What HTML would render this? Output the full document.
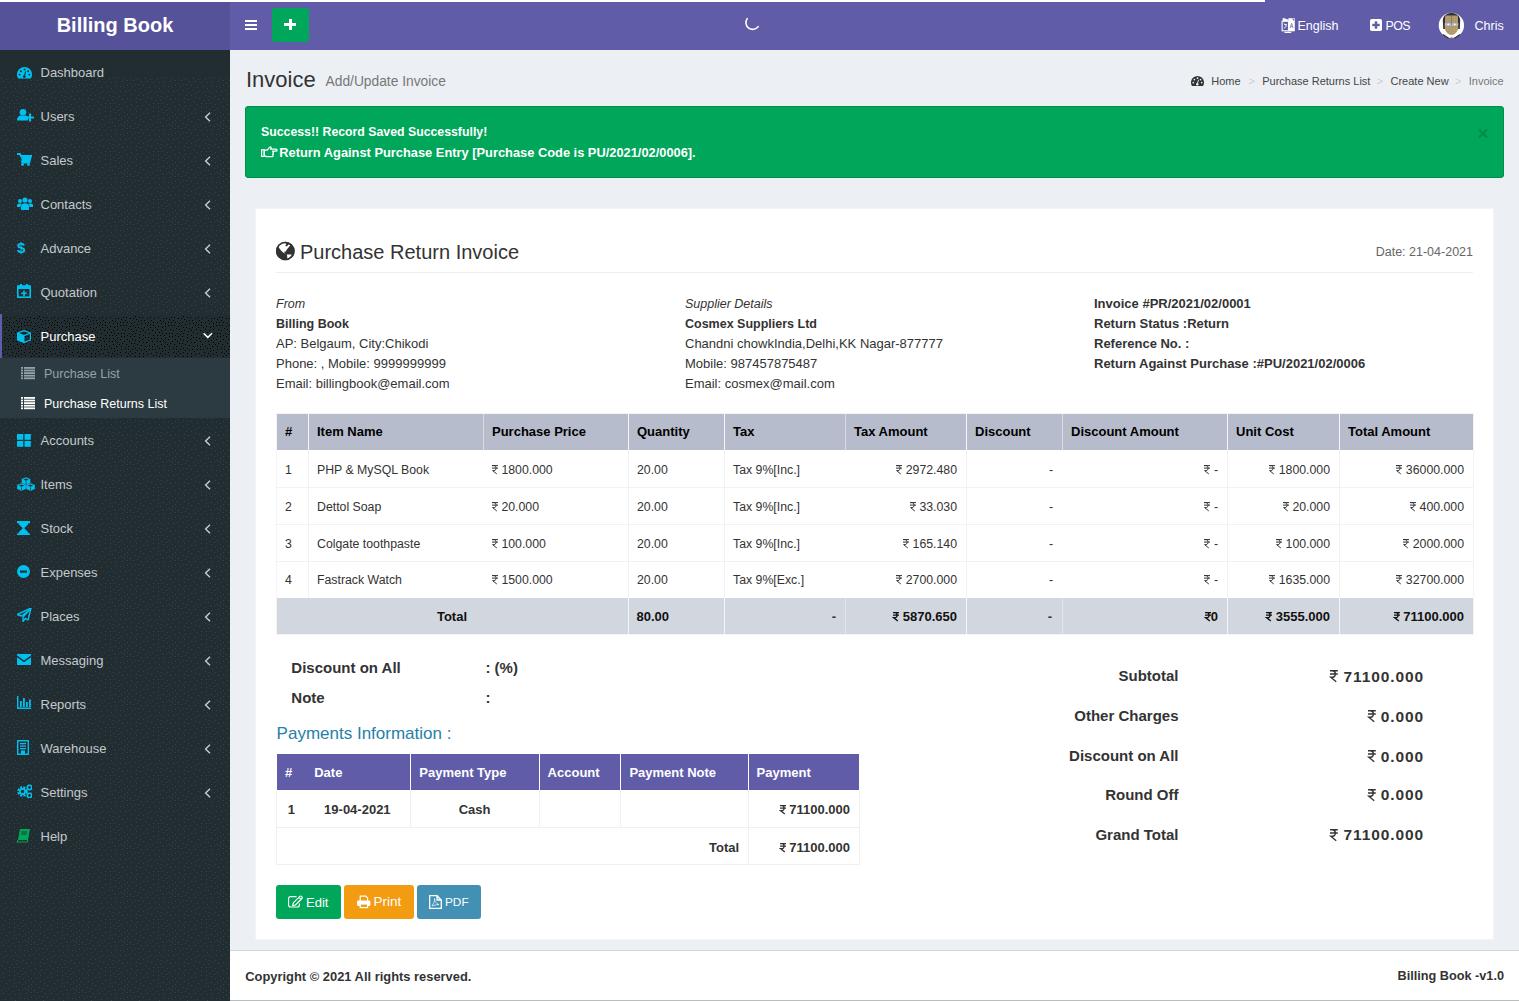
<!DOCTYPE html>
<html><head><meta charset="utf-8"><title>Invoice</title>
<style>
html,body{margin:0;padding:0;width:1519px;height:1001px;overflow:hidden;background:#ecf0f5;}
body{position:relative;font-family:"Liberation Sans",sans-serif;}
.t{position:absolute;white-space:pre;}
.r{position:absolute;display:block;}
</style></head><body>
<div class="r" style="left:0px;top:0px;width:1519px;height:1001px;background:#ecf0f5;"></div>
<div class="r" style="left:0px;top:0px;width:1265px;height:2px;background:#ffffff;"></div>
<div class="r" style="left:1265px;top:0px;width:254px;height:2px;background:#605ca8;"></div>
<div class="r" style="left:0px;top:2px;width:230px;height:48px;background:#555299;"></div>
<div class="r" style="left:230px;top:2px;width:1289px;height:48px;background:#605ca8;"></div>
<div class="r" style="left:0px;top:50px;width:230px;height:951px;background:#222d32;"></div>
<svg class="r" style="left:0;top:77px" width="230" height="924"><defs><pattern id="dotsA" width="48" height="48" patternUnits="userSpaceOnUse"><rect x="20" y="9" width="1" height="1" fill="#36454d"/><rect x="25" y="41" width="1" height="1" fill="#36454d"/><rect x="3" y="4" width="1" height="1" fill="#36454d"/><rect x="34" y="6" width="1" height="1" fill="#36454d"/><rect x="23" y="37" width="1" height="1" fill="#36454d"/><rect x="3" y="32" width="1" height="1" fill="#36454d"/><rect x="13" y="2" width="1" height="1" fill="#36454d"/><rect x="5" y="27" width="1" height="1" fill="#36454d"/><rect x="26" y="4" width="1" height="1" fill="#36454d"/><rect x="15" y="5" width="1" height="1" fill="#36454d"/><rect x="35" y="27" width="1" height="1" fill="#36454d"/><rect x="3" y="36" width="1" height="1" fill="#36454d"/><rect x="7" y="14" width="1" height="1" fill="#36454d"/><rect x="40" y="40" width="1" height="1" fill="#36454d"/><rect x="37" y="3" width="1" height="1" fill="#36454d"/><rect x="36" y="37" width="1" height="1" fill="#36454d"/><rect x="18" y="26" width="1" height="1" fill="#36454d"/><rect x="9" y="34" width="1" height="1" fill="#36454d"/><rect x="19" y="35" width="1" height="1" fill="#36454d"/><rect x="43" y="11" width="1" height="1" fill="#36454d"/><rect x="12" y="23" width="1" height="1" fill="#36454d"/><rect x="45" y="4" width="1" height="1" fill="#36454d"/><rect x="39" y="13" width="1" height="1" fill="#36454d"/><rect x="31" y="43" width="1" height="1" fill="#36454d"/><rect x="20" y="29" width="1" height="1" fill="#36454d"/><rect x="23" y="19" width="1" height="1" fill="#36454d"/><rect x="15" y="11" width="1" height="1" fill="#36454d"/><rect x="44" y="15" width="1" height="1" fill="#36454d"/><rect x="31" y="21" width="1" height="1" fill="#36454d"/><rect x="46" y="28" width="1" height="1" fill="#36454d"/><rect x="20" y="21" width="1" height="1" fill="#36454d"/><rect x="44" y="22" width="1" height="1" fill="#36454d"/><rect x="38" y="31" width="1" height="1" fill="#36454d"/><rect x="44" y="42" width="1" height="1" fill="#36454d"/><rect x="19" y="41" width="1" height="1" fill="#36454d"/><rect x="36" y="43" width="1" height="1" fill="#36454d"/><rect x="28" y="18" width="1" height="1" fill="#36454d"/><rect x="39" y="7" width="1" height="1" fill="#36454d"/><rect x="31" y="3" width="1" height="1" fill="#36454d"/><rect x="13" y="18" width="1" height="1" fill="#36454d"/><rect x="8" y="47" width="1" height="1" fill="#36454d"/><rect x="25" y="31" width="1" height="1" fill="#36454d"/><rect x="5" y="10" width="1" height="1" fill="#36454d"/><rect x="28" y="25" width="1" height="1" fill="#36454d"/><rect x="35" y="17" width="1" height="1" fill="#36454d"/><rect x="22" y="43" width="1" height="1" fill="#36454d"/><rect x="24" y="14" width="1" height="1" fill="#36454d"/><rect x="9" y="5" width="1" height="1" fill="#36454d"/><rect x="11" y="9" width="1" height="1" fill="#36454d"/><rect x="14" y="42" width="1" height="1" fill="#36454d"/><rect x="31" y="37" width="1" height="1" fill="#36454d"/><rect x="18" y="0" width="1" height="1" fill="#36454d"/><rect x="9" y="26" width="1" height="1" fill="#36454d"/><rect x="34" y="23" width="1" height="1" fill="#36454d"/><rect x="44" y="32" width="1" height="1" fill="#36454d"/><rect x="43" y="47" width="1" height="1" fill="#36454d"/><rect x="40" y="25" width="1" height="1" fill="#36454d"/><rect x="28" y="10" width="1" height="1" fill="#36454d"/><rect x="7" y="21" width="1" height="1" fill="#36454d"/><rect x="36" y="9" width="1" height="1" fill="#36454d"/><rect x="24" y="9" width="1" height="1" fill="#36454d"/><rect x="31" y="29" width="1" height="1" fill="#36454d"/><rect x="19" y="5" width="1" height="1" fill="#36454d"/><rect x="1" y="13" width="1" height="1" fill="#36454d"/><rect x="34" y="1" width="1" height="1" fill="#36454d"/><rect x="14" y="34" width="1" height="1" fill="#36454d"/><rect x="34" y="32" width="1" height="1" fill="#36454d"/><rect x="25" y="47" width="1" height="1" fill="#36454d"/><rect x="1" y="1" width="1" height="1" fill="#36454d"/><rect x="44" y="38" width="1" height="1" fill="#36454d"/><rect x="14" y="30" width="1" height="1" fill="#36454d"/><rect x="40" y="21" width="1" height="1" fill="#36454d"/><rect x="9" y="39" width="1" height="1" fill="#36454d"/><rect x="47" y="8" width="1" height="1" fill="#36454d"/><rect x="20" y="16" width="1" height="1" fill="#36454d"/><rect x="9" y="30" width="1" height="1" fill="#36454d"/><rect x="39" y="46" width="1" height="1" fill="#36454d"/><rect x="3" y="20" width="1" height="1" fill="#36454d"/><rect x="28" y="35" width="1" height="1" fill="#36454d"/><rect x="29" y="14" width="1" height="1" fill="#36454d"/><rect x="28" y="45" width="1" height="1" fill="#36454d"/><rect x="1" y="24" width="1" height="1" fill="#36454d"/><rect x="4" y="16" width="1" height="1" fill="#36454d"/><rect x="10" y="16" width="1" height="1" fill="#36454d"/><rect x="33" y="13" width="1" height="1" fill="#36454d"/><rect x="22" y="1" width="1" height="1" fill="#36454d"/><rect x="6" y="42" width="1" height="1" fill="#36454d"/><rect x="12" y="45" width="1" height="1" fill="#36454d"/><rect x="16" y="23" width="1" height="1" fill="#36454d"/><rect x="17" y="32" width="1" height="1" fill="#36454d"/><rect x="40" y="34" width="1" height="1" fill="#36454d"/><rect x="4" y="47" width="1" height="1" fill="#36454d"/><rect x="13" y="14" width="1" height="1" fill="#36454d"/><rect x="47" y="44" width="1" height="1" fill="#36454d"/><rect x="26" y="22" width="1" height="1" fill="#36454d"/><rect x="47" y="18" width="1" height="1" fill="#36454d"/><rect x="42" y="18" width="1" height="1" fill="#36454d"/><rect x="23" y="27" width="1" height="1" fill="#36454d"/><rect x="1" y="40" width="1" height="1" fill="#36454d"/><rect x="14" y="38" width="1" height="1" fill="#36454d"/><rect x="17" y="19" width="1" height="1" fill="#36454d"/><rect x="31" y="8" width="1" height="1" fill="#36454d"/><rect x="41" y="2" width="1" height="1" fill="#36454d"/><rect x="41" y="29" width="1" height="1" fill="#36454d"/><rect x="47" y="36" width="1" height="1" fill="#36454d"/><rect x="28" y="39" width="1" height="1" fill="#36454d"/><rect x="14" y="26" width="1" height="1" fill="#36454d"/><rect x="16" y="45" width="1" height="1" fill="#36454d"/><rect x="22" y="33" width="1" height="1" fill="#36454d"/><rect x="33" y="40" width="1" height="1" fill="#36454d"/><rect x="17" y="14" width="1" height="1" fill="#36454d"/><rect x="6" y="2" width="1" height="1" fill="#36454d"/><rect x="43" y="7" width="1" height="1" fill="#36454d"/><rect x="28" y="1" width="1" height="1" fill="#36454d"/><rect x="31" y="47" width="1" height="1" fill="#36454d"/></pattern><pattern id="dotsB" width="48" height="48" patternUnits="userSpaceOnUse"><rect x="47" y="43" width="1" height="1" fill="#000000"/><rect x="5" y="33" width="1" height="1" fill="#000000"/><rect x="35" y="27" width="1" height="1" fill="#000000"/><rect x="42" y="11" width="1" height="1" fill="#000000"/><rect x="21" y="13" width="1" height="1" fill="#000000"/><rect x="33" y="25" width="1" height="1" fill="#000000"/><rect x="35" y="13" width="1" height="1" fill="#000000"/><rect x="33" y="17" width="1" height="1" fill="#000000"/><rect x="17" y="47" width="1" height="1" fill="#000000"/><rect x="47" y="40" width="1" height="1" fill="#000000"/><rect x="7" y="22" width="1" height="1" fill="#000000"/><rect x="1" y="30" width="1" height="1" fill="#000000"/><rect x="31" y="6" width="1" height="1" fill="#000000"/><rect x="37" y="30" width="1" height="1" fill="#000000"/><rect x="12" y="36" width="1" height="1" fill="#000000"/><rect x="18" y="35" width="1" height="1" fill="#000000"/><rect x="34" y="20" width="1" height="1" fill="#000000"/><rect x="42" y="5" width="1" height="1" fill="#000000"/><rect x="1" y="16" width="1" height="1" fill="#000000"/><rect x="15" y="40" width="1" height="1" fill="#000000"/><rect x="17" y="22" width="1" height="1" fill="#000000"/><rect x="24" y="23" width="1" height="1" fill="#000000"/><rect x="1" y="21" width="1" height="1" fill="#000000"/><rect x="25" y="39" width="1" height="1" fill="#000000"/><rect x="0" y="47" width="1" height="1" fill="#000000"/><rect x="24" y="36" width="1" height="1" fill="#000000"/><rect x="0" y="33" width="1" height="1" fill="#000000"/><rect x="36" y="23" width="1" height="1" fill="#000000"/><rect x="30" y="1" width="1" height="1" fill="#000000"/><rect x="8" y="30" width="1" height="1" fill="#000000"/><rect x="13" y="30" width="1" height="1" fill="#000000"/><rect x="3" y="38" width="1" height="1" fill="#000000"/><rect x="20" y="19" width="1" height="1" fill="#000000"/><rect x="39" y="40" width="1" height="1" fill="#000000"/><rect x="11" y="16" width="1" height="1" fill="#000000"/><rect x="24" y="6" width="1" height="1" fill="#000000"/><rect x="41" y="28" width="1" height="1" fill="#000000"/><rect x="13" y="13" width="1" height="1" fill="#000000"/><rect x="41" y="45" width="1" height="1" fill="#000000"/><rect x="34" y="2" width="1" height="1" fill="#000000"/><rect x="0" y="11" width="1" height="1" fill="#000000"/><rect x="21" y="26" width="1" height="1" fill="#000000"/><rect x="6" y="8" width="1" height="1" fill="#000000"/><rect x="21" y="34" width="1" height="1" fill="#000000"/><rect x="37" y="15" width="1" height="1" fill="#000000"/><rect x="25" y="30" width="1" height="1" fill="#000000"/><rect x="21" y="7" width="1" height="1" fill="#000000"/><rect x="25" y="47" width="1" height="1" fill="#000000"/><rect x="31" y="23" width="1" height="1" fill="#000000"/><rect x="29" y="36" width="1" height="1" fill="#000000"/><rect x="34" y="35" width="1" height="1" fill="#000000"/><rect x="13" y="22" width="1" height="1" fill="#000000"/><rect x="9" y="19" width="1" height="1" fill="#000000"/><rect x="37" y="9" width="1" height="1" fill="#000000"/><rect x="46" y="23" width="1" height="1" fill="#000000"/><rect x="29" y="14" width="1" height="1" fill="#000000"/><rect x="12" y="39" width="1" height="1" fill="#000000"/><rect x="41" y="8" width="1" height="1" fill="#000000"/><rect x="4" y="24" width="1" height="1" fill="#000000"/><rect x="5" y="42" width="1" height="1" fill="#000000"/><rect x="15" y="32" width="1" height="1" fill="#000000"/><rect x="20" y="30" width="1" height="1" fill="#000000"/><rect x="45" y="34" width="1" height="1" fill="#000000"/><rect x="28" y="45" width="1" height="1" fill="#000000"/><rect x="18" y="11" width="1" height="1" fill="#000000"/><rect x="5" y="29" width="1" height="1" fill="#000000"/><rect x="29" y="32" width="1" height="1" fill="#000000"/><rect x="9" y="47" width="1" height="1" fill="#000000"/><rect x="43" y="37" width="1" height="1" fill="#000000"/><rect x="22" y="2" width="1" height="1" fill="#000000"/><rect x="43" y="25" width="1" height="1" fill="#000000"/><rect x="18" y="39" width="1" height="1" fill="#000000"/><rect x="26" y="27" width="1" height="1" fill="#000000"/><rect x="36" y="46" width="1" height="1" fill="#000000"/><rect x="35" y="7" width="1" height="1" fill="#000000"/><rect x="11" y="11" width="1" height="1" fill="#000000"/><rect x="7" y="37" width="1" height="1" fill="#000000"/><rect x="13" y="6" width="1" height="1" fill="#000000"/><rect x="16" y="44" width="1" height="1" fill="#000000"/><rect x="8" y="14" width="1" height="1" fill="#000000"/><rect x="46" y="1" width="1" height="1" fill="#000000"/><rect x="39" y="24" width="1" height="1" fill="#000000"/><rect x="11" y="33" width="1" height="1" fill="#000000"/><rect x="39" y="0" width="1" height="1" fill="#000000"/><rect x="7" y="4" width="1" height="1" fill="#000000"/><rect x="44" y="15" width="1" height="1" fill="#000000"/><rect x="10" y="2" width="1" height="1" fill="#000000"/><rect x="43" y="1" width="1" height="1" fill="#000000"/><rect x="23" y="43" width="1" height="1" fill="#000000"/><rect x="31" y="40" width="1" height="1" fill="#000000"/><rect x="26" y="13" width="1" height="1" fill="#000000"/><rect x="5" y="17" width="1" height="1" fill="#000000"/><rect x="9" y="6" width="1" height="1" fill="#000000"/><rect x="33" y="43" width="1" height="1" fill="#000000"/><rect x="19" y="2" width="1" height="1" fill="#000000"/><rect x="2" y="41" width="1" height="1" fill="#000000"/><rect x="17" y="14" width="1" height="1" fill="#000000"/><rect x="45" y="29" width="1" height="1" fill="#000000"/><rect x="37" y="2" width="1" height="1" fill="#000000"/><rect x="25" y="17" width="1" height="1" fill="#000000"/><rect x="10" y="42" width="1" height="1" fill="#000000"/><rect x="14" y="1" width="1" height="1" fill="#000000"/><rect x="8" y="33" width="1" height="1" fill="#000000"/><rect x="4" y="13" width="1" height="1" fill="#000000"/><rect x="16" y="4" width="1" height="1" fill="#000000"/><rect x="27" y="9" width="1" height="1" fill="#000000"/><rect x="24" y="9" width="1" height="1" fill="#000000"/><rect x="4" y="6" width="1" height="1" fill="#000000"/><rect x="45" y="46" width="1" height="1" fill="#000000"/><rect x="47" y="26" width="1" height="1" fill="#000000"/><rect x="13" y="19" width="1" height="1" fill="#000000"/><rect x="9" y="9" width="1" height="1" fill="#000000"/><rect x="43" y="32" width="1" height="1" fill="#000000"/><rect x="19" y="42" width="1" height="1" fill="#000000"/><rect x="43" y="43" width="1" height="1" fill="#000000"/><rect x="6" y="45" width="1" height="1" fill="#000000"/><rect x="17" y="28" width="1" height="1" fill="#000000"/><rect x="38" y="20" width="1" height="1" fill="#000000"/><rect x="36" y="37" width="1" height="1" fill="#000000"/><rect x="39" y="36" width="1" height="1" fill="#000000"/><rect x="47" y="37" width="1" height="1" fill="#000000"/><rect x="28" y="25" width="1" height="1" fill="#000000"/><rect x="0" y="4" width="1" height="1" fill="#000000"/><rect x="8" y="25" width="1" height="1" fill="#000000"/><rect x="22" y="47" width="1" height="1" fill="#000000"/><rect x="22" y="17" width="1" height="1" fill="#000000"/><rect x="12" y="44" width="1" height="1" fill="#000000"/><rect x="13" y="25" width="1" height="1" fill="#000000"/><rect x="28" y="20" width="1" height="1" fill="#000000"/><rect x="38" y="6" width="1" height="1" fill="#000000"/><rect x="32" y="33" width="1" height="1" fill="#000000"/><rect x="2" y="44" width="1" height="1" fill="#000000"/><rect x="40" y="14" width="1" height="1" fill="#000000"/><rect x="30" y="28" width="1" height="1" fill="#000000"/><rect x="6" y="1" width="1" height="1" fill="#000000"/><rect x="1" y="7" width="1" height="1" fill="#000000"/><rect x="45" y="7" width="1" height="1" fill="#000000"/><rect x="32" y="30" width="1" height="1" fill="#000000"/><rect x="3" y="2" width="1" height="1" fill="#000000"/><rect x="39" y="32" width="1" height="1" fill="#000000"/><rect x="21" y="38" width="1" height="1" fill="#000000"/><rect x="30" y="9" width="1" height="1" fill="#000000"/><rect x="17" y="7" width="1" height="1" fill="#000000"/><rect x="47" y="19" width="1" height="1" fill="#000000"/><rect x="43" y="18" width="1" height="1" fill="#000000"/><rect x="43" y="40" width="1" height="1" fill="#000000"/><rect x="34" y="10" width="1" height="1" fill="#000000"/><rect x="39" y="17" width="1" height="1" fill="#000000"/><rect x="27" y="1" width="1" height="1" fill="#000000"/><rect x="27" y="41" width="1" height="1" fill="#000000"/><rect x="36" y="33" width="1" height="1" fill="#000000"/><rect x="34" y="39" width="1" height="1" fill="#000000"/><rect x="4" y="47" width="1" height="1" fill="#000000"/><rect x="14" y="10" width="1" height="1" fill="#000000"/><rect x="25" y="33" width="1" height="1" fill="#000000"/><rect x="32" y="12" width="1" height="1" fill="#000000"/><rect x="20" y="45" width="1" height="1" fill="#000000"/><rect x="45" y="4" width="1" height="1" fill="#000000"/><rect x="16" y="19" width="1" height="1" fill="#000000"/><rect x="43" y="21" width="1" height="1" fill="#000000"/><rect x="10" y="28" width="1" height="1" fill="#000000"/><rect x="37" y="42" width="1" height="1" fill="#000000"/><rect x="9" y="39" width="1" height="1" fill="#000000"/><rect x="12" y="47" width="1" height="1" fill="#000000"/><rect x="2" y="26" width="1" height="1" fill="#000000"/><rect x="15" y="16" width="1" height="1" fill="#000000"/><rect x="18" y="17" width="1" height="1" fill="#000000"/><rect x="31" y="45" width="1" height="1" fill="#000000"/><rect x="6" y="11" width="1" height="1" fill="#000000"/><rect x="21" y="22" width="1" height="1" fill="#000000"/><rect x="28" y="17" width="1" height="1" fill="#000000"/><rect x="16" y="25" width="1" height="1" fill="#000000"/><rect x="47" y="14" width="1" height="1" fill="#000000"/><rect x="27" y="6" width="1" height="1" fill="#000000"/><rect x="45" y="12" width="1" height="1" fill="#000000"/><rect x="18" y="32" width="1" height="1" fill="#000000"/><rect x="4" y="21" width="1" height="1" fill="#000000"/><rect x="3" y="9" width="1" height="1" fill="#000000"/><rect x="16" y="37" width="1" height="1" fill="#000000"/><rect x="19" y="24" width="1" height="1" fill="#000000"/><rect x="2" y="35" width="1" height="1" fill="#000000"/><rect x="38" y="27" width="1" height="1" fill="#000000"/><rect x="25" y="20" width="1" height="1" fill="#000000"/><rect x="40" y="3" width="1" height="1" fill="#000000"/><rect x="10" y="22" width="1" height="1" fill="#000000"/><rect x="19" y="5" width="1" height="1" fill="#000000"/><rect x="25" y="3" width="1" height="1" fill="#000000"/><rect x="29" y="4" width="1" height="1" fill="#000000"/><rect x="41" y="34" width="1" height="1" fill="#000000"/><rect x="23" y="28" width="1" height="1" fill="#000000"/><rect x="39" y="11" width="1" height="1" fill="#000000"/><rect x="36" y="18" width="1" height="1" fill="#000000"/><rect x="31" y="19" width="1" height="1" fill="#000000"/><rect x="21" y="10" width="1" height="1" fill="#000000"/><rect x="33" y="47" width="1" height="1" fill="#000000"/><rect x="32" y="37" width="1" height="1" fill="#000000"/></pattern></defs><rect x="0" y="0" width="230" height="924" fill="url(#dotsA)"/></svg>
<div class="t" style="top:11.67px;font-size:20px;line-height:26px;color:#fff;font-weight:700;left:-385px;width:1000px;text-align:center;">Billing Book</div>
<div class="r" style="left:245px;top:20px;width:12px;height:2px;background:#fff;"></div>
<div class="r" style="left:245px;top:24px;width:12px;height:2px;background:#fff;"></div>
<div class="r" style="left:245px;top:28px;width:12px;height:2px;background:#fff;"></div>
<div class="r" style="left:272px;top:8px;width:37px;height:34px;background:#00a65a;border-radius:3px;"></div>
<div class="r" style="left:284px;top:23px;width:12px;height:3px;background:#fff;"></div>
<div class="r" style="left:288.5px;top:19px;width:3px;height:11px;background:#fff;"></div>
<svg class="r" style="left:744px;top:15px;" width="18" height="18" viewBox="0 0 18 18"><path d="M3.2 3.6 A6 6 0 1 0 14.2 11.6" fill="none" stroke="#fff" stroke-width="1.6" stroke-linecap="round"/></svg>
<svg class="r" style="left:1281px;top:17px;" width="16" height="17" viewBox="0 0 16 17"><rect x="1.1" y="4.2" width="6.4" height="9.6" fill="none" stroke="#fff" stroke-width="1.1"/><path d="M1.8 0.8 L7.5 2.8 L7.5 4.2 L1.6 4.2 Z" fill="#fff"/><path d="M7.4 1.2 L13.8 1.2 L13.8 14.3 L7.4 14.3 Z" fill="#fff"/><path d="M11 1.8 L13.2 1.8 L13.2 4 Z" fill="#605ca8"/><path d="M9.2 11 L10.6 6.3 L12 11 M9.7 9.5 L11.5 9.5" fill="none" stroke="#8880b8" stroke-width="0.9"/><path d="M2.8 6.5 L5.5 9 L2.8 11.5 M3.5 7.5 L5.8 7.5" fill="none" stroke="#fff" stroke-width="0.9"/><path d="M3.5 14.8 L10.8 14.8 L9.8 16 L3.5 16 Z" fill="#fff"/></svg>
<div class="t" style="top:17.67px;font-size:12.5px;line-height:16px;color:#fff;left:1297.5px;">English</div>
<svg class="r" style="left:1370px;top:19px;" width="12" height="12" viewBox="0 0 12 12"><rect x="0" y="0" width="12" height="12" rx="1.8" fill="#fff"/><rect x="4.8" y="2.3" width="2.4" height="7.4" fill="#605ca8"/><rect x="2.3" y="4.8" width="7.4" height="2.4" fill="#605ca8"/></svg>
<div class="t" style="top:17.80px;font-size:12.4px;line-height:16px;color:#fff;letter-spacing:-0.6px;left:1385.5px;">POS</div>
<svg class="r" style="left:1438px;top:12px;" width="27" height="27" viewBox="0 0 27 27"><defs><pattern id="avp" width="2.2" height="2.2" patternUnits="userSpaceOnUse"><rect width="2.2" height="2.2" fill="#8e969c"/><circle cx="1.1" cy="1.1" r="0.72" fill="#f0a020"/></pattern></defs><circle cx="13.4" cy="13.4" r="12.65" fill="#fff"/><path d="M5.2 17 L4.8 8 C5.5 3 9 1 13.5 1 C18 1 21.5 3 22.2 8 L21.8 17 L19.5 17 L19.5 6 L7.5 6 L7.5 17 Z" fill="#2e3236"/><path d="M7.2 3.5 L19.8 3.5 L20.3 16 C20 19.5 16.5 23 13.5 23 C10.5 23 7 19.5 6.7 16 Z" fill="url(#avp)"/><path d="M6.8 11.3 L20.2 11.3 L20.2 13.6 L6.8 13.6 Z" fill="#b8c0c4"/><circle cx="10.3" cy="12.4" r="0.9" fill="#fff"/><circle cx="16.7" cy="12.4" r="0.9" fill="#fff"/><path d="M13.5 4 L13.5 13" stroke="#666" stroke-width="0.6"/><path d="M5 22.5 L10.5 26.3 M22 22.5 L16.5 26.3" stroke="#2e3236" stroke-width="1.1"/><path d="M12 24.8 L15 24.8 L13.5 26.6 Z" fill="#f0a020"/></svg>
<div class="t" style="top:17.67px;font-size:12.5px;line-height:16px;color:#fff;left:1474.6px;">Chris</div>
<div class="r" style="left:0px;top:314px;width:230px;height:44px;background:#222d32;"></div>
<svg class="r" style="left:0;top:316px" width="230" height="41"><rect width="230" height="41" fill="url(#dotsB)"/></svg>
<div class="r" style="left:0px;top:314px;width:2px;height:44px;background:#605ca8;"></div>
<div class="r" style="left:0px;top:358px;width:230px;height:60px;background:#2c3b41;"></div>
<div class="t" style="top:64.00px;font-size:13px;line-height:17px;color:#c3cacd;left:40.5px;">Dashboard</div>
<svg class="r" style="left:17px;top:67px;" width="15" height="12" viewBox="0 0 15 12"><path d="M1.16 11.5 A7.5 7.5 0 1 1 13.84 11.5 Z" fill="#00c0ef"/><circle cx="7.50" cy="2.54" r="0.98" fill="#222d32"/><circle cx="3.92" cy="4.15" r="0.98" fill="#222d32"/><circle cx="11.08" cy="4.15" r="0.98" fill="#222d32"/><circle cx="2.65" cy="7.62" r="0.98" fill="#222d32"/><circle cx="12.35" cy="7.62" r="0.98" fill="#222d32"/><path d="M7.15 9.46 L8.77 4.38" stroke="#222d32" stroke-width="1.04"/><circle cx="7.27" cy="9.58" r="1.38" fill="#222d32"/></svg>
<div class="t" style="top:108.00px;font-size:13px;line-height:17px;color:#c3cacd;left:40.5px;">Users</div>
<svg class="r" style="left:17px;top:109px;" width="18" height="13" viewBox="0 0 18 13"><circle cx="6" cy="3.3" r="3.3" fill="#00c0ef"/><path d="M0 11.5 C0 8 2 6.5 4 6.5 L8.5 6.5 C10 6.5 11 7.5 11 8.5 L11 11.5 Z" fill="#00c0ef"/><rect x="9" y="7.5" width="8" height="2" fill="#00c0ef"/><rect x="12" y="4.5" width="2" height="8" fill="#00c0ef"/></svg>
<svg class="r" style="left:203px;top:110.5px;" width="9" height="12" viewBox="0 0 9 12"><path d="M7 1.7 L2.6 6 L7 10.3" fill="none" stroke="#c4cfd2" stroke-width="1.4"/></svg>
<div class="t" style="top:152.00px;font-size:13px;line-height:17px;color:#c3cacd;left:40.5px;">Sales</div>
<svg class="r" style="left:17px;top:153px;" width="15" height="14" viewBox="0 0 15 14"><path d="M0 1 L3 1 L4 3 L14 3 L12.5 8.5 L5 8.5 L5.5 9.5 L13 9.5" fill="none" stroke="#00c0ef" stroke-width="1.8"/><path d="M3.5 3 L14 3 L12.5 8 L5 8 Z" fill="#00c0ef"/><circle cx="5.5" cy="11.5" r="1.4" fill="#00c0ef"/><circle cx="11.5" cy="11.5" r="1.4" fill="#00c0ef"/></svg>
<svg class="r" style="left:203px;top:154.5px;" width="9" height="12" viewBox="0 0 9 12"><path d="M7 1.7 L2.6 6 L7 10.3" fill="none" stroke="#c4cfd2" stroke-width="1.4"/></svg>
<div class="t" style="top:196.00px;font-size:13px;line-height:17px;color:#c3cacd;left:40.5px;">Contacts</div>
<svg class="r" style="left:17px;top:197px;" width="17" height="14" viewBox="0 0 17 14"><circle cx="8" cy="3" r="2.6" fill="#00c0ef"/><circle cx="3" cy="4" r="2" fill="#00c0ef"/><circle cx="13" cy="4" r="2" fill="#00c0ef"/><path d="M4 13 L4 9.5 C4 7 6 6.3 8 6.3 C10 6.3 12 7 12 9.5 L12 13 Z" fill="#00c0ef"/><path d="M0 10 L0 8.5 C0 7 1 6.5 3 6.5 L4.5 6.5 L3.5 10 Z" fill="#00c0ef"/><path d="M16 10 L16 8.5 C16 7 15 6.5 13 6.5 L11.5 6.5 L12.5 10 Z" fill="#00c0ef"/></svg>
<svg class="r" style="left:203px;top:198.5px;" width="9" height="12" viewBox="0 0 9 12"><path d="M7 1.7 L2.6 6 L7 10.3" fill="none" stroke="#c4cfd2" stroke-width="1.4"/></svg>
<div class="t" style="top:240.00px;font-size:13px;line-height:17px;color:#c3cacd;left:40.5px;">Advance</div>
<svg class="r" style="left:17px;top:240px;" width="12" height="15" viewBox="0 0 12 15"><text x="0" y="12.5" font-family="Liberation Sans" font-weight="700" font-size="15" fill="#00c0ef">$</text></svg>
<svg class="r" style="left:203px;top:242.5px;" width="9" height="12" viewBox="0 0 9 12"><path d="M7 1.7 L2.6 6 L7 10.3" fill="none" stroke="#c4cfd2" stroke-width="1.4"/></svg>
<div class="t" style="top:284.00px;font-size:13px;line-height:17px;color:#c3cacd;left:40.5px;">Quotation</div>
<svg class="r" style="left:17px;top:284px;" width="14" height="14" viewBox="0 0 14 14"><rect x="0.8" y="2" width="12.4" height="11.2" fill="none" stroke="#00c0ef" stroke-width="1.6"/><rect x="0.8" y="2" width="12.4" height="3" fill="#00c0ef"/><rect x="3" y="0" width="2" height="3" fill="#00c0ef"/><rect x="9" y="0" width="2" height="3" fill="#00c0ef"/><rect x="6.2" y="6.5" width="1.6" height="5.5" fill="#00c0ef"/><rect x="4.2" y="8.5" width="5.6" height="1.6" fill="#00c0ef"/></svg>
<svg class="r" style="left:203px;top:286.5px;" width="9" height="12" viewBox="0 0 9 12"><path d="M7 1.7 L2.6 6 L7 10.3" fill="none" stroke="#c4cfd2" stroke-width="1.4"/></svg>
<div class="t" style="top:328.00px;font-size:13px;line-height:17px;color:#fff;left:40.5px;">Purchase</div>
<svg class="r" style="left:17px;top:329.8px;" width="14" height="13.5" viewBox="0 0 14 13.5"><path d="M7 0.6 L13.4 3 L13.4 10 L7 12.6 L0.6 10 L0.6 3 Z" fill="none" stroke="#00c0ef" stroke-width="1.2" stroke-linejoin="round"/><path d="M0.6 3.2 L7 5.6 L7 12.6 L0.6 10 Z" fill="#00c0ef"/><path d="M0.6 3 L7 5.6 L13.4 3 M7 5.6 L7 12.6" fill="none" stroke="#00c0ef" stroke-width="1.1"/></svg>
<div class="t" style="top:432.00px;font-size:13px;line-height:17px;color:#c3cacd;left:40.5px;">Accounts</div>
<svg class="r" style="left:17px;top:434px;" width="14" height="13" viewBox="0 0 14 13"><rect x="0" y="0" width="6.3" height="5.8" fill="#00c0ef"/><rect x="7.5" y="0" width="6.3" height="5.8" fill="#00c0ef"/><rect x="0" y="7" width="6.3" height="5.8" fill="#00c0ef"/><rect x="7.5" y="7" width="6.3" height="5.8" fill="#00c0ef"/></svg>
<svg class="r" style="left:203px;top:434.5px;" width="9" height="12" viewBox="0 0 9 12"><path d="M7 1.7 L2.6 6 L7 10.3" fill="none" stroke="#c4cfd2" stroke-width="1.4"/></svg>
<div class="t" style="top:476.00px;font-size:13px;line-height:17px;color:#c3cacd;left:40.5px;">Items</div>
<svg class="r" style="left:17px;top:477px;" width="18" height="14" viewBox="0 0 18 14"><path d="M9 0.2999999999999998 L13.3 2.1 L13.3 5.9 L9 7.7 L4.7 5.9 L4.7 2.1 Z" fill="#00c0ef"/><path d="M9 1.5999999999999999 L11.700000000000001 2.6500000000000004 L9 3.7 L6.300000000000001 2.6500000000000004 Z" fill="#222d32"/><path d="M9 4.3 L9 6.9" stroke="#222d32" stroke-width="0.8"/><path d="M4.5 6.3 L8.8 8.1 L8.8 11.9 L4.5 13.7 L0.20000000000000018 11.9 L0.20000000000000018 8.1 Z" fill="#00c0ef"/><path d="M4.5 7.6 L7.200000000000001 8.65 L4.5 9.7 L1.8000000000000003 8.65 Z" fill="#222d32"/><path d="M4.5 10.3 L4.5 12.899999999999999" stroke="#222d32" stroke-width="0.8"/><path d="M13.5 6.3 L17.8 8.1 L17.8 11.9 L13.5 13.7 L9.2 11.9 L9.2 8.1 Z" fill="#00c0ef"/><path d="M13.5 7.6 L16.2 8.65 L13.5 9.7 L10.799999999999999 8.65 Z" fill="#222d32"/><path d="M13.5 10.3 L13.5 12.899999999999999" stroke="#222d32" stroke-width="0.8"/></svg>
<svg class="r" style="left:203px;top:478.5px;" width="9" height="12" viewBox="0 0 9 12"><path d="M7 1.7 L2.6 6 L7 10.3" fill="none" stroke="#c4cfd2" stroke-width="1.4"/></svg>
<div class="t" style="top:520.00px;font-size:13px;line-height:17px;color:#c3cacd;left:40.5px;">Stock</div>
<svg class="r" style="left:17px;top:520.5px;" width="13" height="14.5" viewBox="0 0 13 14.5"><rect x="0" y="0" width="13" height="2" fill="#00c0ef"/><rect x="0" y="12.5" width="13" height="2" fill="#00c0ef"/><path d="M1.3 1.5 L11.7 1.5 C11.5 4.5 7.5 6 7.5 7.25 C7.5 8.5 11.5 10 11.7 13 L1.3 13 C1.5 10 5.5 8.5 5.5 7.25 C5.5 6 1.5 4.5 1.3 1.5 Z" fill="#00c0ef"/></svg>
<svg class="r" style="left:203px;top:522.5px;" width="9" height="12" viewBox="0 0 9 12"><path d="M7 1.7 L2.6 6 L7 10.3" fill="none" stroke="#c4cfd2" stroke-width="1.4"/></svg>
<div class="t" style="top:564.00px;font-size:13px;line-height:17px;color:#c3cacd;left:40.5px;">Expenses</div>
<svg class="r" style="left:17px;top:565px;" width="13" height="13" viewBox="0 0 13 13"><circle cx="6.5" cy="6.5" r="6.5" fill="#00c0ef"/><rect x="3" y="5.5" width="7" height="2.2" fill="#222d32"/></svg>
<svg class="r" style="left:203px;top:566.5px;" width="9" height="12" viewBox="0 0 9 12"><path d="M7 1.7 L2.6 6 L7 10.3" fill="none" stroke="#c4cfd2" stroke-width="1.4"/></svg>
<div class="t" style="top:608.00px;font-size:13px;line-height:17px;color:#c3cacd;left:40.5px;">Places</div>
<svg class="r" style="left:17px;top:608px;" width="15" height="14" viewBox="0 0 15 14"><path d="M14 0 L0 6.5 L4.5 8 L12 2.5 L6 9 L6 13.5 L8.3 10.3 L11 12 Z" fill="none" stroke="#00c0ef" stroke-width="1.4" stroke-linejoin="round"/></svg>
<svg class="r" style="left:203px;top:610.5px;" width="9" height="12" viewBox="0 0 9 12"><path d="M7 1.7 L2.6 6 L7 10.3" fill="none" stroke="#c4cfd2" stroke-width="1.4"/></svg>
<div class="t" style="top:652.00px;font-size:13px;line-height:17px;color:#c3cacd;left:40.5px;">Messaging</div>
<svg class="r" style="left:17px;top:654px;" width="14" height="11" viewBox="0 0 14 11"><path d="M0 0 L14 0 L14 1.5 L7 6.5 L0 1.5 Z" fill="#00c0ef"/><path d="M0 3.3 L7 8.3 L14 3.3 L14 11 L0 11 Z" fill="#00c0ef"/></svg>
<svg class="r" style="left:203px;top:654.5px;" width="9" height="12" viewBox="0 0 9 12"><path d="M7 1.7 L2.6 6 L7 10.3" fill="none" stroke="#c4cfd2" stroke-width="1.4"/></svg>
<div class="t" style="top:696.00px;font-size:13px;line-height:17px;color:#c3cacd;left:40.5px;">Reports</div>
<svg class="r" style="left:17px;top:696px;" width="14" height="13" viewBox="0 0 14 13"><path d="M0.7 0 L0.7 12.3 L14 12.3" fill="none" stroke="#00c0ef" stroke-width="1.4"/><rect x="3" y="5" width="1.8" height="6" fill="#00c0ef"/><rect x="6" y="2" width="1.8" height="9" fill="#00c0ef"/><rect x="9" y="6" width="1.8" height="5" fill="#00c0ef"/><rect x="12" y="3.5" width="1.8" height="7.5" fill="#00c0ef"/></svg>
<svg class="r" style="left:203px;top:698.5px;" width="9" height="12" viewBox="0 0 9 12"><path d="M7 1.7 L2.6 6 L7 10.3" fill="none" stroke="#c4cfd2" stroke-width="1.4"/></svg>
<div class="t" style="top:740.00px;font-size:13px;line-height:17px;color:#c3cacd;left:40.5px;">Warehouse</div>
<svg class="r" style="left:17px;top:740px;" width="12" height="15" viewBox="0 0 12 15"><rect x="0.7" y="0.7" width="10.6" height="13.6" fill="none" stroke="#00c0ef" stroke-width="1.4"/><rect x="3" y="3" width="6" height="1.3" fill="#00c0ef"/><rect x="3" y="5.5" width="6" height="1.3" fill="#00c0ef"/><rect x="3" y="8" width="6" height="1.3" fill="#00c0ef"/><rect x="4" y="10.5" width="4" height="3.5" fill="#00c0ef"/></svg>
<svg class="r" style="left:203px;top:742.5px;" width="9" height="12" viewBox="0 0 9 12"><path d="M7 1.7 L2.6 6 L7 10.3" fill="none" stroke="#c4cfd2" stroke-width="1.4"/></svg>
<div class="t" style="top:784.00px;font-size:13px;line-height:17px;color:#c3cacd;left:40.5px;">Settings</div>
<svg class="r" style="left:17px;top:784px;" width="15" height="14" viewBox="0 0 15 14"><circle cx="5.5" cy="7.5" r="4" fill="none" stroke="#00c0ef" stroke-width="2.6" stroke-dasharray="2 1.2"/><circle cx="5.5" cy="7.5" r="2.6" fill="none" stroke="#00c0ef" stroke-width="1.6"/><circle cx="12.5" cy="3.5" r="2.2" fill="none" stroke="#00c0ef" stroke-width="1.6"/><circle cx="12.5" cy="11.5" r="2.2" fill="none" stroke="#00c0ef" stroke-width="1.6"/></svg>
<svg class="r" style="left:203px;top:786.5px;" width="9" height="12" viewBox="0 0 9 12"><path d="M7 1.7 L2.6 6 L7 10.3" fill="none" stroke="#c4cfd2" stroke-width="1.4"/></svg>
<div class="t" style="top:828.00px;font-size:13px;line-height:17px;color:#c3cacd;left:40.5px;">Help</div>
<svg class="r" style="left:17px;top:829px;" width="14" height="14" viewBox="0 0 14 14"><path d="M3 0 L13 0 L11 11 L1 11 Z" fill="#00a65a"/><path d="M1 11 L0 13 L10 13 L11 11" fill="none" stroke="#00a65a" stroke-width="1.2"/><path d="M4.5 3 L10 3 M4.2 5 L9.7 5" stroke="#222d32" stroke-width="0.9"/></svg>
<svg class="r" style="left:202px;top:331px;" width="12" height="9" viewBox="0 0 12 9"><path d="M1.6 2.2 L5.8 6.4 L10 2.2" fill="none" stroke="#fff" stroke-width="1.5"/></svg>
<svg class="r" style="left:21px;top:367px;" width="14" height="13" viewBox="0 0 14 13"><rect x="0" y="0.0" width="2" height="1.8" fill="#95a3a8"/><rect x="3" y="0.0" width="11" height="1.8" fill="#95a3a8"/><rect x="0" y="2.6" width="2" height="1.8" fill="#95a3a8"/><rect x="3" y="2.6" width="11" height="1.8" fill="#95a3a8"/><rect x="0" y="5.2" width="2" height="1.8" fill="#95a3a8"/><rect x="3" y="5.2" width="11" height="1.8" fill="#95a3a8"/><rect x="0" y="7.800000000000001" width="2" height="1.8" fill="#95a3a8"/><rect x="3" y="7.800000000000001" width="11" height="1.8" fill="#95a3a8"/><rect x="0" y="10.4" width="2" height="1.8" fill="#95a3a8"/><rect x="3" y="10.4" width="11" height="1.8" fill="#95a3a8"/></svg>
<div class="t" style="top:365.67px;font-size:12.5px;line-height:16px;color:#95a3a8;left:44px;">Purchase List</div>
<svg class="r" style="left:21px;top:397px;" width="14" height="13" viewBox="0 0 14 13"><rect x="0" y="0.0" width="2" height="1.8" fill="#fff"/><rect x="3" y="0.0" width="11" height="1.8" fill="#fff"/><rect x="0" y="2.6" width="2" height="1.8" fill="#fff"/><rect x="3" y="2.6" width="11" height="1.8" fill="#fff"/><rect x="0" y="5.2" width="2" height="1.8" fill="#fff"/><rect x="3" y="5.2" width="11" height="1.8" fill="#fff"/><rect x="0" y="7.800000000000001" width="2" height="1.8" fill="#fff"/><rect x="3" y="7.800000000000001" width="11" height="1.8" fill="#fff"/><rect x="0" y="10.4" width="2" height="1.8" fill="#fff"/><rect x="3" y="10.4" width="11" height="1.8" fill="#fff"/></svg>
<div class="t" style="top:395.67px;font-size:12.5px;line-height:16px;color:#fff;left:44px;">Purchase Returns List</div>
<div class="t" style="top:64.88px;font-size:22px;line-height:29px;color:#333;left:246px;">Invoice</div>
<div class="t" style="top:73.22px;font-size:13.8px;line-height:18px;color:#777;left:325.5px;">Add/Update Invoice</div>
<svg class="r" style="left:1191px;top:76px;" width="13" height="10" viewBox="0 0 13 10"><path d="M1.02 10 A6.5 6.5 0 1 1 11.98 10 Z" fill="#333"/><circle cx="6.50" cy="2.20" r="0.85" fill="#ecf0f5"/><circle cx="3.40" cy="3.60" r="0.85" fill="#ecf0f5"/><circle cx="9.60" cy="3.60" r="0.85" fill="#ecf0f5"/><circle cx="2.30" cy="6.60" r="0.85" fill="#ecf0f5"/><circle cx="10.70" cy="6.60" r="0.85" fill="#ecf0f5"/><path d="M6.20 8.20 L7.60 3.80" stroke="#ecf0f5" stroke-width="0.90"/><circle cx="6.30" cy="8.30" r="1.20" fill="#ecf0f5"/></svg>
<div class="t" style="top:74.39px;font-size:11px;line-height:14px;color:#444;left:1211.2px;">Home</div>
<div class="t" style="top:74.39px;font-size:11px;line-height:14px;color:#ccc;left:1248.4px;">></div>
<div class="t" style="top:74.39px;font-size:11px;line-height:14px;color:#444;left:1262.2px;">Purchase Returns List</div>
<div class="t" style="top:74.39px;font-size:11px;line-height:14px;color:#ccc;left:1376.7px;">></div>
<div class="t" style="top:74.39px;font-size:11px;line-height:14px;color:#444;left:1390.5px;">Create New</div>
<div class="t" style="top:74.39px;font-size:11px;line-height:14px;color:#ccc;left:1455px;">></div>
<div class="t" style="top:74.39px;font-size:11px;line-height:14px;color:#777;left:1468.8px;">Invoice</div>
<div class="r" style="left:245px;top:106px;width:1259px;height:72px;background:#00a65a;box-sizing:border-box;border:1px solid #008d4c;border-radius:3px;"></div>
<div class="t" style="top:124.44px;font-size:12.3px;line-height:16px;color:#fff;font-weight:700;left:261px;">Success!! Record Saved Successfully!</div>
<svg class="r" style="left:261px;top:146px;" width="17" height="12" viewBox="0 0 17 12"><path d="M3.2 4.2 L6 4.2 L8.6 1.4 C9.2 0.7 10.3 1 10.1 2 L9.6 3.2 L15 3.2 C16.4 3.2 16.4 5.2 15 5.2 L11.6 5.2 C12.6 5.4 12.6 7 11.6 7 C12.6 7.2 12.6 8.8 11.6 8.8 C12.4 9 12.2 10.6 11.2 10.6 L5.5 10.6 L3.2 9.6 Z" fill="none" stroke="#fff" stroke-width="1.25" stroke-linejoin="round"/><rect x="0.6" y="3.8" width="2.6" height="6.6" fill="none" stroke="#fff" stroke-width="1.2"/></svg>
<div class="t" style="top:143.85px;font-size:12.85px;line-height:17px;color:#fff;font-weight:700;left:279.3px;">Return Against Purchase Entry [Purchase Code is PU/2021/02/0006].</div>
<svg class="r" style="left:1478px;top:129px;" width="10" height="9" viewBox="0 0 10 9"><path d="M1 0.5 L9 8.5 M9 0.5 L1 8.5" stroke="#008a4a" stroke-width="2"/></svg>
<div class="r" style="left:255px;top:208px;width:1239px;height:732px;background:#fff;box-sizing:border-box;border:1px solid #f4f4f4;"></div>
<svg class="r" style="left:276px;top:241px;" width="20" height="20" viewBox="0 0 20 20"><circle cx="9.3" cy="10" r="9.3" fill="#333"/><path d="M3.2 3.6 C4.8 2 7.5 1.5 9.8 2.2 L10.2 3.6 L9.2 4.6 L10.8 5.6 L12.5 3.6 L14.2 4 C13.5 5.8 12.2 7 11 8.3 L9.6 10.8 L8.8 10.2 L8.2 11.6 L9.6 12.4 C8.4 12.6 7.2 11.8 6 10.6 C4.8 9.3 3.6 8 2.8 6.6 C2.6 5.5 2.8 4.5 3.2 3.6 Z" fill="#fff"/><path d="M10.8 13.6 C12.3 13.4 14 13.2 15.8 13.8 C15 15.4 13.4 17 11.2 17.8 C11.4 16.4 11.2 15 10.8 13.6 Z" fill="#fff"/><circle cx="9.3" cy="10" r="8.6" fill="none" stroke="#333" stroke-width="1.5"/></svg>
<div class="t" style="top:239.07px;font-size:20px;line-height:26px;color:#333;left:300px;">Purchase Return Invoice</div>
<div class="t" style="top:243.67px;font-size:12.5px;line-height:16px;color:#666;left:473px;width:1000px;text-align:right;">Date: 21-04-2021</div>
<div class="r" style="left:276px;top:272px;width:1197px;height:1px;background:#eeeeee;"></div>
<div class="t" style="top:295.67px;font-size:12.5px;line-height:16px;color:#333;font-style:italic;left:276px;">From</div>
<div class="t" style="top:315.67px;font-size:12.5px;line-height:16px;color:#333;font-weight:700;left:276px;">Billing Book</div>
<div class="t" style="top:335.00px;font-size:13px;line-height:17px;color:#333;left:276px;">AP: Belgaum, City:Chikodi</div>
<div class="t" style="top:355.00px;font-size:13px;line-height:17px;color:#333;left:276px;">Phone: , Mobile: 9999999999</div>
<div class="t" style="top:375.00px;font-size:13px;line-height:17px;color:#333;left:276px;">Email: billingbook@email.com</div>
<div class="t" style="top:295.67px;font-size:12.5px;line-height:16px;color:#333;font-style:italic;left:685px;">Supplier Details</div>
<div class="t" style="top:315.67px;font-size:12.5px;line-height:16px;color:#333;font-weight:700;left:685px;">Cosmex Suppliers Ltd</div>
<div class="t" style="top:335.00px;font-size:13px;line-height:17px;color:#333;left:685px;">Chandni chowkIndia,Delhi,KK Nagar-877777</div>
<div class="t" style="top:355.00px;font-size:13px;line-height:17px;color:#333;left:685px;">Mobile: 987457875487</div>
<div class="t" style="top:375.00px;font-size:13px;line-height:17px;color:#333;left:685px;">Email: cosmex@mail.com</div>
<div class="t" style="top:295.00px;font-size:13px;line-height:17px;color:#333;font-weight:700;left:1094px;">Invoice #PR/2021/02/0001</div>
<div class="t" style="top:315.00px;font-size:13px;line-height:17px;color:#333;font-weight:700;left:1094px;">Return Status :Return</div>
<div class="t" style="top:335.00px;font-size:13px;line-height:17px;color:#333;font-weight:700;left:1094px;">Reference No. :</div>
<div class="t" style="top:355.00px;font-size:13px;line-height:17px;color:#333;font-weight:700;left:1094px;">Return Against Purchase :#PU/2021/02/0006</div>
<div class="r" style="left:276px;top:413px;width:1198px;height:222px;background:#f4f4f4;"></div>
<div class="r" style="left:277px;top:414px;width:1196px;height:220px;background:#fff;"></div>
<div class="r" style="left:277px;top:414px;width:1196px;height:36px;background:#b6bccb;"></div>
<div class="r" style="left:277px;top:598px;width:1196px;height:36px;background:#d2d6de;"></div>
<div class="r" style="left:276px;top:487px;width:1197px;height:1px;background:#f2f2f2;"></div>
<div class="r" style="left:276px;top:524px;width:1197px;height:1px;background:#f2f2f2;"></div>
<div class="r" style="left:276px;top:561px;width:1197px;height:1px;background:#f2f2f2;"></div>
<div class="r" style="left:308px;top:414px;width:1px;height:36px;background:#f6f7f9;"></div>
<div class="r" style="left:308px;top:450px;width:1px;height:148px;background:#f2f2f2;"></div>
<div class="r" style="left:483px;top:414px;width:1px;height:36px;background:repeating-linear-gradient(to bottom,#e6e9ef 0 1px,#c9ced9 1px 2px);"></div>
<div class="r" style="left:628px;top:414px;width:1px;height:36px;background:#f6f7f9;"></div>
<div class="r" style="left:628px;top:450px;width:1px;height:148px;background:#f2f2f2;"></div>
<div class="r" style="left:628px;top:598px;width:1px;height:36px;background:#f4f5f8;"></div>
<div class="r" style="left:724px;top:414px;width:1px;height:36px;background:#f6f7f9;"></div>
<div class="r" style="left:724px;top:450px;width:1px;height:148px;background:#f2f2f2;"></div>
<div class="r" style="left:724px;top:598px;width:1px;height:36px;background:#f4f5f8;"></div>
<div class="r" style="left:845px;top:414px;width:1px;height:36px;background:repeating-linear-gradient(to bottom,#e6e9ef 0 1px,#c9ced9 1px 2px);"></div>
<div class="r" style="left:845px;top:598px;width:1px;height:36px;background:repeating-linear-gradient(to bottom,#eceef3 0 1px,#d6dae2 1px 2px);"></div>
<div class="r" style="left:966px;top:414px;width:1px;height:36px;background:#f6f7f9;"></div>
<div class="r" style="left:966px;top:450px;width:1px;height:148px;background:#f2f2f2;"></div>
<div class="r" style="left:966px;top:598px;width:1px;height:36px;background:#f4f5f8;"></div>
<div class="r" style="left:1062px;top:414px;width:1px;height:36px;background:repeating-linear-gradient(to bottom,#e6e9ef 0 1px,#c9ced9 1px 2px);"></div>
<div class="r" style="left:1062px;top:598px;width:1px;height:36px;background:repeating-linear-gradient(to bottom,#eceef3 0 1px,#d6dae2 1px 2px);"></div>
<div class="r" style="left:1227px;top:414px;width:1px;height:36px;background:#f6f7f9;"></div>
<div class="r" style="left:1227px;top:450px;width:1px;height:148px;background:#f2f2f2;"></div>
<div class="r" style="left:1227px;top:598px;width:1px;height:36px;background:#f4f5f8;"></div>
<div class="r" style="left:1339px;top:414px;width:1px;height:36px;background:#f6f7f9;"></div>
<div class="r" style="left:1339px;top:450px;width:1px;height:148px;background:#f2f2f2;"></div>
<div class="r" style="left:1339px;top:598px;width:1px;height:36px;background:#f4f5f8;"></div>
<div class="t" style="top:423.00px;font-size:13px;line-height:17px;color:#000;font-weight:700;left:285px;">#</div>
<div class="t" style="top:423.00px;font-size:13px;line-height:17px;color:#000;font-weight:700;left:317px;">Item Name</div>
<div class="t" style="top:423.00px;font-size:13px;line-height:17px;color:#000;font-weight:700;left:492px;">Purchase Price</div>
<div class="t" style="top:423.00px;font-size:13px;line-height:17px;color:#000;font-weight:700;left:637px;">Quantity</div>
<div class="t" style="top:423.00px;font-size:13px;line-height:17px;color:#000;font-weight:700;left:733px;">Tax</div>
<div class="t" style="top:423.00px;font-size:13px;line-height:17px;color:#000;font-weight:700;left:854px;">Tax Amount</div>
<div class="t" style="top:423.00px;font-size:13px;line-height:17px;color:#000;font-weight:700;left:975px;">Discount</div>
<div class="t" style="top:423.00px;font-size:13px;line-height:17px;color:#000;font-weight:700;left:1071px;">Discount Amount</div>
<div class="t" style="top:423.00px;font-size:13px;line-height:17px;color:#000;font-weight:700;left:1236px;">Unit Cost</div>
<div class="t" style="top:423.00px;font-size:13px;line-height:17px;color:#000;font-weight:700;left:1348px;">Total Amount</div>
<div class="t" style="top:462.14px;font-size:12.3px;line-height:16px;color:#333;left:285px;">1</div>
<div class="t" style="top:462.14px;font-size:12.3px;line-height:16px;color:#333;left:317px;">PHP &amp; MySQL Book</div>
<div class="t" style="top:462.14px;font-size:12.3px;line-height:16px;color:#333;left:492px;"><svg width="6.00" height="9.00" viewBox="0 0 6 9" style="vertical-align:baseline;overflow:visible"><path d="M0 0.6 L6 0.6 M0 3.1 L6 3.1 M0.3 0.6 L2 0.6 C4.8 0.6 4.8 5.6 2 5.6 L0.6 5.6 L4.8 9" fill="none" stroke="#333" stroke-width="1.00"/></svg> 1800.000</div>
<div class="t" style="top:462.14px;font-size:12.3px;line-height:16px;color:#333;left:637px;">20.00</div>
<div class="t" style="top:462.14px;font-size:12.3px;line-height:16px;color:#333;left:733px;">Tax 9%[Inc.]</div>
<div class="t" style="top:462.14px;font-size:12.3px;line-height:16px;color:#333;left:-43px;width:1000px;text-align:right;"><svg width="6.00" height="9.00" viewBox="0 0 6 9" style="vertical-align:baseline;overflow:visible"><path d="M0 0.6 L6 0.6 M0 3.1 L6 3.1 M0.3 0.6 L2 0.6 C4.8 0.6 4.8 5.6 2 5.6 L0.6 5.6 L4.8 9" fill="none" stroke="#333" stroke-width="1.00"/></svg> 2972.480</div>
<div class="t" style="top:462.14px;font-size:12.3px;line-height:16px;color:#333;left:53px;width:1000px;text-align:right;">-</div>
<div class="t" style="top:462.14px;font-size:12.3px;line-height:16px;color:#333;left:218px;width:1000px;text-align:right;"><svg width="6.00" height="9.00" viewBox="0 0 6 9" style="vertical-align:baseline;overflow:visible"><path d="M0 0.6 L6 0.6 M0 3.1 L6 3.1 M0.3 0.6 L2 0.6 C4.8 0.6 4.8 5.6 2 5.6 L0.6 5.6 L4.8 9" fill="none" stroke="#333" stroke-width="1.00"/></svg> -</div>
<div class="t" style="top:462.14px;font-size:12.3px;line-height:16px;color:#333;left:330px;width:1000px;text-align:right;"><svg width="6.00" height="9.00" viewBox="0 0 6 9" style="vertical-align:baseline;overflow:visible"><path d="M0 0.6 L6 0.6 M0 3.1 L6 3.1 M0.3 0.6 L2 0.6 C4.8 0.6 4.8 5.6 2 5.6 L0.6 5.6 L4.8 9" fill="none" stroke="#333" stroke-width="1.00"/></svg> 1800.000</div>
<div class="t" style="top:462.14px;font-size:12.3px;line-height:16px;color:#333;left:464px;width:1000px;text-align:right;"><svg width="6.00" height="9.00" viewBox="0 0 6 9" style="vertical-align:baseline;overflow:visible"><path d="M0 0.6 L6 0.6 M0 3.1 L6 3.1 M0.3 0.6 L2 0.6 C4.8 0.6 4.8 5.6 2 5.6 L0.6 5.6 L4.8 9" fill="none" stroke="#333" stroke-width="1.00"/></svg> 36000.000</div>
<div class="t" style="top:499.24px;font-size:12.3px;line-height:16px;color:#333;left:285px;">2</div>
<div class="t" style="top:499.24px;font-size:12.3px;line-height:16px;color:#333;left:317px;">Dettol Soap</div>
<div class="t" style="top:499.24px;font-size:12.3px;line-height:16px;color:#333;left:492px;"><svg width="6.00" height="9.00" viewBox="0 0 6 9" style="vertical-align:baseline;overflow:visible"><path d="M0 0.6 L6 0.6 M0 3.1 L6 3.1 M0.3 0.6 L2 0.6 C4.8 0.6 4.8 5.6 2 5.6 L0.6 5.6 L4.8 9" fill="none" stroke="#333" stroke-width="1.00"/></svg> 20.000</div>
<div class="t" style="top:499.24px;font-size:12.3px;line-height:16px;color:#333;left:637px;">20.00</div>
<div class="t" style="top:499.24px;font-size:12.3px;line-height:16px;color:#333;left:733px;">Tax 9%[Inc.]</div>
<div class="t" style="top:499.24px;font-size:12.3px;line-height:16px;color:#333;left:-43px;width:1000px;text-align:right;"><svg width="6.00" height="9.00" viewBox="0 0 6 9" style="vertical-align:baseline;overflow:visible"><path d="M0 0.6 L6 0.6 M0 3.1 L6 3.1 M0.3 0.6 L2 0.6 C4.8 0.6 4.8 5.6 2 5.6 L0.6 5.6 L4.8 9" fill="none" stroke="#333" stroke-width="1.00"/></svg> 33.030</div>
<div class="t" style="top:499.24px;font-size:12.3px;line-height:16px;color:#333;left:53px;width:1000px;text-align:right;">-</div>
<div class="t" style="top:499.24px;font-size:12.3px;line-height:16px;color:#333;left:218px;width:1000px;text-align:right;"><svg width="6.00" height="9.00" viewBox="0 0 6 9" style="vertical-align:baseline;overflow:visible"><path d="M0 0.6 L6 0.6 M0 3.1 L6 3.1 M0.3 0.6 L2 0.6 C4.8 0.6 4.8 5.6 2 5.6 L0.6 5.6 L4.8 9" fill="none" stroke="#333" stroke-width="1.00"/></svg> -</div>
<div class="t" style="top:499.24px;font-size:12.3px;line-height:16px;color:#333;left:330px;width:1000px;text-align:right;"><svg width="6.00" height="9.00" viewBox="0 0 6 9" style="vertical-align:baseline;overflow:visible"><path d="M0 0.6 L6 0.6 M0 3.1 L6 3.1 M0.3 0.6 L2 0.6 C4.8 0.6 4.8 5.6 2 5.6 L0.6 5.6 L4.8 9" fill="none" stroke="#333" stroke-width="1.00"/></svg> 20.000</div>
<div class="t" style="top:499.24px;font-size:12.3px;line-height:16px;color:#333;left:464px;width:1000px;text-align:right;"><svg width="6.00" height="9.00" viewBox="0 0 6 9" style="vertical-align:baseline;overflow:visible"><path d="M0 0.6 L6 0.6 M0 3.1 L6 3.1 M0.3 0.6 L2 0.6 C4.8 0.6 4.8 5.6 2 5.6 L0.6 5.6 L4.8 9" fill="none" stroke="#333" stroke-width="1.00"/></svg> 400.000</div>
<div class="t" style="top:535.74px;font-size:12.3px;line-height:16px;color:#333;left:285px;">3</div>
<div class="t" style="top:535.74px;font-size:12.3px;line-height:16px;color:#333;left:317px;">Colgate toothpaste</div>
<div class="t" style="top:535.74px;font-size:12.3px;line-height:16px;color:#333;left:492px;"><svg width="6.00" height="9.00" viewBox="0 0 6 9" style="vertical-align:baseline;overflow:visible"><path d="M0 0.6 L6 0.6 M0 3.1 L6 3.1 M0.3 0.6 L2 0.6 C4.8 0.6 4.8 5.6 2 5.6 L0.6 5.6 L4.8 9" fill="none" stroke="#333" stroke-width="1.00"/></svg> 100.000</div>
<div class="t" style="top:535.74px;font-size:12.3px;line-height:16px;color:#333;left:637px;">20.00</div>
<div class="t" style="top:535.74px;font-size:12.3px;line-height:16px;color:#333;left:733px;">Tax 9%[Inc.]</div>
<div class="t" style="top:535.74px;font-size:12.3px;line-height:16px;color:#333;left:-43px;width:1000px;text-align:right;"><svg width="6.00" height="9.00" viewBox="0 0 6 9" style="vertical-align:baseline;overflow:visible"><path d="M0 0.6 L6 0.6 M0 3.1 L6 3.1 M0.3 0.6 L2 0.6 C4.8 0.6 4.8 5.6 2 5.6 L0.6 5.6 L4.8 9" fill="none" stroke="#333" stroke-width="1.00"/></svg> 165.140</div>
<div class="t" style="top:535.74px;font-size:12.3px;line-height:16px;color:#333;left:53px;width:1000px;text-align:right;">-</div>
<div class="t" style="top:535.74px;font-size:12.3px;line-height:16px;color:#333;left:218px;width:1000px;text-align:right;"><svg width="6.00" height="9.00" viewBox="0 0 6 9" style="vertical-align:baseline;overflow:visible"><path d="M0 0.6 L6 0.6 M0 3.1 L6 3.1 M0.3 0.6 L2 0.6 C4.8 0.6 4.8 5.6 2 5.6 L0.6 5.6 L4.8 9" fill="none" stroke="#333" stroke-width="1.00"/></svg> -</div>
<div class="t" style="top:535.74px;font-size:12.3px;line-height:16px;color:#333;left:330px;width:1000px;text-align:right;"><svg width="6.00" height="9.00" viewBox="0 0 6 9" style="vertical-align:baseline;overflow:visible"><path d="M0 0.6 L6 0.6 M0 3.1 L6 3.1 M0.3 0.6 L2 0.6 C4.8 0.6 4.8 5.6 2 5.6 L0.6 5.6 L4.8 9" fill="none" stroke="#333" stroke-width="1.00"/></svg> 100.000</div>
<div class="t" style="top:535.74px;font-size:12.3px;line-height:16px;color:#333;left:464px;width:1000px;text-align:right;"><svg width="6.00" height="9.00" viewBox="0 0 6 9" style="vertical-align:baseline;overflow:visible"><path d="M0 0.6 L6 0.6 M0 3.1 L6 3.1 M0.3 0.6 L2 0.6 C4.8 0.6 4.8 5.6 2 5.6 L0.6 5.6 L4.8 9" fill="none" stroke="#333" stroke-width="1.00"/></svg> 2000.000</div>
<div class="t" style="top:572.14px;font-size:12.3px;line-height:16px;color:#333;left:285px;">4</div>
<div class="t" style="top:572.14px;font-size:12.3px;line-height:16px;color:#333;left:317px;">Fastrack Watch</div>
<div class="t" style="top:572.14px;font-size:12.3px;line-height:16px;color:#333;left:492px;"><svg width="6.00" height="9.00" viewBox="0 0 6 9" style="vertical-align:baseline;overflow:visible"><path d="M0 0.6 L6 0.6 M0 3.1 L6 3.1 M0.3 0.6 L2 0.6 C4.8 0.6 4.8 5.6 2 5.6 L0.6 5.6 L4.8 9" fill="none" stroke="#333" stroke-width="1.00"/></svg> 1500.000</div>
<div class="t" style="top:572.14px;font-size:12.3px;line-height:16px;color:#333;left:637px;">20.00</div>
<div class="t" style="top:572.14px;font-size:12.3px;line-height:16px;color:#333;left:733px;">Tax 9%[Exc.]</div>
<div class="t" style="top:572.14px;font-size:12.3px;line-height:16px;color:#333;left:-43px;width:1000px;text-align:right;"><svg width="6.00" height="9.00" viewBox="0 0 6 9" style="vertical-align:baseline;overflow:visible"><path d="M0 0.6 L6 0.6 M0 3.1 L6 3.1 M0.3 0.6 L2 0.6 C4.8 0.6 4.8 5.6 2 5.6 L0.6 5.6 L4.8 9" fill="none" stroke="#333" stroke-width="1.00"/></svg> 2700.000</div>
<div class="t" style="top:572.14px;font-size:12.3px;line-height:16px;color:#333;left:53px;width:1000px;text-align:right;">-</div>
<div class="t" style="top:572.14px;font-size:12.3px;line-height:16px;color:#333;left:218px;width:1000px;text-align:right;"><svg width="6.00" height="9.00" viewBox="0 0 6 9" style="vertical-align:baseline;overflow:visible"><path d="M0 0.6 L6 0.6 M0 3.1 L6 3.1 M0.3 0.6 L2 0.6 C4.8 0.6 4.8 5.6 2 5.6 L0.6 5.6 L4.8 9" fill="none" stroke="#333" stroke-width="1.00"/></svg> -</div>
<div class="t" style="top:572.14px;font-size:12.3px;line-height:16px;color:#333;left:330px;width:1000px;text-align:right;"><svg width="6.00" height="9.00" viewBox="0 0 6 9" style="vertical-align:baseline;overflow:visible"><path d="M0 0.6 L6 0.6 M0 3.1 L6 3.1 M0.3 0.6 L2 0.6 C4.8 0.6 4.8 5.6 2 5.6 L0.6 5.6 L4.8 9" fill="none" stroke="#333" stroke-width="1.00"/></svg> 1635.000</div>
<div class="t" style="top:572.14px;font-size:12.3px;line-height:16px;color:#333;left:464px;width:1000px;text-align:right;"><svg width="6.00" height="9.00" viewBox="0 0 6 9" style="vertical-align:baseline;overflow:visible"><path d="M0 0.6 L6 0.6 M0 3.1 L6 3.1 M0.3 0.6 L2 0.6 C4.8 0.6 4.8 5.6 2 5.6 L0.6 5.6 L4.8 9" fill="none" stroke="#333" stroke-width="1.00"/></svg> 32700.000</div>
<div class="t" style="top:608.00px;font-size:13px;line-height:17px;color:#111;font-weight:700;left:-48px;width:1000px;text-align:center;">Total</div>
<div class="t" style="top:608.00px;font-size:13px;line-height:17px;color:#111;font-weight:700;left:636.5px;">80.00</div>
<div class="t" style="top:608.00px;font-size:13px;line-height:17px;color:#333;font-weight:700;left:-164px;width:1000px;text-align:right;">-</div>
<div class="t" style="top:608.00px;font-size:13px;line-height:17px;color:#111;font-weight:700;left:-43px;width:1000px;text-align:right;"><svg width="6.00" height="9.00" viewBox="0 0 6 9" style="vertical-align:baseline;overflow:visible"><path d="M0 0.6 L6 0.6 M0 3.1 L6 3.1 M0.3 0.6 L2 0.6 C4.8 0.6 4.8 5.6 2 5.6 L0.6 5.6 L4.8 9" fill="none" stroke="#111" stroke-width="1.35"/></svg> 5870.650</div>
<div class="t" style="top:608.00px;font-size:13px;line-height:17px;color:#333;font-weight:700;left:52px;width:1000px;text-align:right;">-</div>
<div class="t" style="top:608.00px;font-size:13px;line-height:17px;color:#111;font-weight:700;left:218px;width:1000px;text-align:right;"><svg width="6.00" height="9.00" viewBox="0 0 6 9" style="vertical-align:baseline;overflow:visible"><path d="M0 0.6 L6 0.6 M0 3.1 L6 3.1 M0.3 0.6 L2 0.6 C4.8 0.6 4.8 5.6 2 5.6 L0.6 5.6 L4.8 9" fill="none" stroke="#111" stroke-width="1.35"/></svg>0</div>
<div class="t" style="top:608.00px;font-size:13px;line-height:17px;color:#111;font-weight:700;left:330px;width:1000px;text-align:right;"><svg width="6.00" height="9.00" viewBox="0 0 6 9" style="vertical-align:baseline;overflow:visible"><path d="M0 0.6 L6 0.6 M0 3.1 L6 3.1 M0.3 0.6 L2 0.6 C4.8 0.6 4.8 5.6 2 5.6 L0.6 5.6 L4.8 9" fill="none" stroke="#111" stroke-width="1.35"/></svg> 3555.000</div>
<div class="t" style="top:608.00px;font-size:13px;line-height:17px;color:#111;font-weight:700;left:464px;width:1000px;text-align:right;"><svg width="6.00" height="9.00" viewBox="0 0 6 9" style="vertical-align:baseline;overflow:visible"><path d="M0 0.6 L6 0.6 M0 3.1 L6 3.1 M0.3 0.6 L2 0.6 C4.8 0.6 4.8 5.6 2 5.6 L0.6 5.6 L4.8 9" fill="none" stroke="#111" stroke-width="1.35"/></svg> 71100.000</div>
<div class="t" style="top:657.80px;font-size:15px;line-height:20px;color:#333;font-weight:700;left:291.3px;">Discount on All</div>
<div class="t" style="top:657.80px;font-size:15px;line-height:20px;color:#333;font-weight:700;left:485.4px;">: (%)</div>
<div class="t" style="top:687.80px;font-size:15px;line-height:20px;color:#333;font-weight:700;left:291.3px;">Note</div>
<div class="t" style="top:687.80px;font-size:15px;line-height:20px;color:#333;font-weight:700;left:485.4px;">:</div>
<div class="t" style="top:723.11px;font-size:17px;line-height:22px;color:#2580a8;left:276.6px;">Payments Information :</div>
<div class="r" style="left:277px;top:754px;width:582px;height:36px;background:#605ca8;"></div>
<div class="r" style="left:410px;top:754px;width:1px;height:36px;background:#ffffff;"></div>
<div class="r" style="left:539px;top:754px;width:1px;height:36px;background:#ffffff;"></div>
<div class="r" style="left:620px;top:754px;width:1px;height:36px;background:#ffffff;"></div>
<div class="r" style="left:748px;top:754px;width:1px;height:36px;background:#ffffff;"></div>
<div class="r" style="left:276px;top:790px;width:584px;height:75px;background:#fff;box-sizing:border-box;border:1px solid #f0f0f0;border-top:none;"></div>
<div class="r" style="left:276px;top:827px;width:584px;height:1px;background:#f0f0f0;"></div>
<div class="r" style="left:410px;top:790px;width:1px;height:37px;background:#f0f0f0;"></div>
<div class="r" style="left:539px;top:790px;width:1px;height:37px;background:#f0f0f0;"></div>
<div class="r" style="left:620px;top:790px;width:1px;height:37px;background:#f0f0f0;"></div>
<div class="r" style="left:748px;top:790px;width:1px;height:37px;background:#f0f0f0;"></div>
<div class="r" style="left:748px;top:827px;width:1px;height:38px;background:#f0f0f0;"></div>
<div class="t" style="top:763.60px;font-size:13px;line-height:17px;color:#fff;font-weight:700;left:285px;">#</div>
<div class="t" style="top:763.60px;font-size:13px;line-height:17px;color:#fff;font-weight:700;left:314.2px;">Date</div>
<div class="t" style="top:763.60px;font-size:13px;line-height:17px;color:#fff;font-weight:700;left:419.3px;">Payment Type</div>
<div class="t" style="top:763.60px;font-size:13px;line-height:17px;color:#fff;font-weight:700;left:547.6px;">Account</div>
<div class="t" style="top:763.60px;font-size:13px;line-height:17px;color:#fff;font-weight:700;left:629.4px;">Payment Note</div>
<div class="t" style="top:763.60px;font-size:13px;line-height:17px;color:#fff;font-weight:700;left:756.6px;">Payment</div>
<div class="t" style="top:801.00px;font-size:13px;line-height:17px;color:#333;font-weight:700;left:287.8px;">1</div>
<div class="t" style="top:801.00px;font-size:13px;line-height:17px;color:#333;font-weight:700;left:324.1px;">19-04-2021</div>
<div class="t" style="top:801.00px;font-size:13px;line-height:17px;color:#333;font-weight:700;left:-25.399999999999977px;width:1000px;text-align:center;">Cash</div>
<div class="t" style="top:801.00px;font-size:13px;line-height:17px;color:#333;font-weight:700;left:-150px;width:1000px;text-align:right;"><svg width="6.00" height="9.00" viewBox="0 0 6 9" style="vertical-align:baseline;overflow:visible"><path d="M0 0.6 L6 0.6 M0 3.1 L6 3.1 M0.3 0.6 L2 0.6 C4.8 0.6 4.8 5.6 2 5.6 L0.6 5.6 L4.8 9" fill="none" stroke="#333" stroke-width="1.35"/></svg> 71100.000</div>
<div class="t" style="top:838.60px;font-size:13px;line-height:17px;color:#333;font-weight:700;left:-260.79999999999995px;width:1000px;text-align:right;">Total</div>
<div class="t" style="top:838.60px;font-size:13px;line-height:17px;color:#333;font-weight:700;left:-150px;width:1000px;text-align:right;"><svg width="6.00" height="9.00" viewBox="0 0 6 9" style="vertical-align:baseline;overflow:visible"><path d="M0 0.6 L6 0.6 M0 3.1 L6 3.1 M0.3 0.6 L2 0.6 C4.8 0.6 4.8 5.6 2 5.6 L0.6 5.6 L4.8 9" fill="none" stroke="#333" stroke-width="1.35"/></svg> 71100.000</div>
<div class="r" style="left:276px;top:885px;width:65px;height:34px;background:#00a65a;border-radius:3px;"></div>
<div class="r" style="left:344px;top:885px;width:70px;height:34px;background:#f39c12;border-radius:3px;"></div>
<div class="r" style="left:417px;top:885px;width:64px;height:34px;background:#4291b5;border-radius:3px;"></div>
<svg class="r" style="left:288px;top:895px;" width="16" height="13" viewBox="0 0 16 13"><path d="M8.5 1.6 L2.6 1.6 Q0.6 1.6 0.6 3.6 L0.6 10 Q0.6 12 2.6 12 L9.4 12 Q11.4 12 11.4 10 L11.4 8.6" fill="none" stroke="#fff" stroke-width="1.1"/><path d="M4.6 10.6 L5.3 7.9 L11.8 1.4 Q12.6 0.6 13.4 1.4 L13.9 1.9 Q14.7 2.7 13.9 3.5 L7.4 10 Z M10.9 2.3 L13 4.4" fill="none" stroke="#fff" stroke-width="1.1" stroke-linejoin="round"/></svg>
<div class="t" style="top:893.60px;font-size:13px;line-height:17px;color:#fff;left:306px;">Edit</div>
<svg class="r" style="left:357px;top:895px;" width="14" height="14" viewBox="0 0 14 14"><path d="M3.2 6 L3.2 1.1 L8.8 1.1 L10.6 2.9 L10.6 6" fill="none" stroke="#fff" stroke-width="1.2"/><rect x="0" y="5.5" width="13.4" height="5.6" rx="1.3" fill="#fff"/><rect x="3.2" y="9" width="7.4" height="3.6" fill="#f39c12" stroke="#fff" stroke-width="1.2"/></svg>
<div class="t" style="top:892.92px;font-size:13.5px;line-height:18px;color:#fff;left:373.5px;">Print</div>
<svg class="r" style="left:429px;top:895px;" width="13" height="14" viewBox="0 0 13 14"><path d="M0.7 0.7 L8 0.7 L12.3 5 L12.3 13.3 L0.7 13.3 Z M8 0.7 L8 5 L12.3 5" fill="none" stroke="#fff" stroke-width="1.3"/><path d="M3 11 C5 8 6 5 5.5 3.5 C5 5 7 9 10 9.5 C7.5 9.5 4.5 10.5 3 11 Z" fill="none" stroke="#fff" stroke-width="0.7"/></svg>
<div class="t" style="top:895.31px;font-size:11.8px;line-height:15px;color:#fff;left:445px;">PDF</div>
<div class="t" style="top:666.10px;font-size:15px;line-height:20px;color:#333;font-weight:700;left:178.5px;width:1000px;text-align:right;">Subtotal</div>
<div class="t" style="top:666.63px;font-size:15.5px;line-height:20px;color:#333;font-weight:700;letter-spacing:0.9px;left:424px;width:1000px;text-align:right;margin-right:-0.9px;"><svg width="7.80" height="11.70" viewBox="0 0 6 9" style="vertical-align:baseline;overflow:visible"><path d="M0 0.6 L6 0.6 M0 3.1 L6 3.1 M0.3 0.6 L2 0.6 C4.8 0.6 4.8 5.6 2 5.6 L0.6 5.6 L4.8 9" fill="none" stroke="#333" stroke-width="1.04"/></svg> 71100.000</div>
<div class="t" style="top:706.00px;font-size:15px;line-height:20px;color:#333;font-weight:700;left:178.5px;width:1000px;text-align:right;">Other Charges</div>
<div class="t" style="top:706.53px;font-size:15.5px;line-height:20px;color:#333;font-weight:700;letter-spacing:0.9px;left:424px;width:1000px;text-align:right;margin-right:-0.9px;"><svg width="7.80" height="11.70" viewBox="0 0 6 9" style="vertical-align:baseline;overflow:visible"><path d="M0 0.6 L6 0.6 M0 3.1 L6 3.1 M0.3 0.6 L2 0.6 C4.8 0.6 4.8 5.6 2 5.6 L0.6 5.6 L4.8 9" fill="none" stroke="#333" stroke-width="1.04"/></svg> 0.000</div>
<div class="t" style="top:746.10px;font-size:15px;line-height:20px;color:#333;font-weight:700;left:178.5px;width:1000px;text-align:right;">Discount on All</div>
<div class="t" style="top:746.63px;font-size:15.5px;line-height:20px;color:#333;font-weight:700;letter-spacing:0.9px;left:424px;width:1000px;text-align:right;margin-right:-0.9px;"><svg width="7.80" height="11.70" viewBox="0 0 6 9" style="vertical-align:baseline;overflow:visible"><path d="M0 0.6 L6 0.6 M0 3.1 L6 3.1 M0.3 0.6 L2 0.6 C4.8 0.6 4.8 5.6 2 5.6 L0.6 5.6 L4.8 9" fill="none" stroke="#333" stroke-width="1.04"/></svg> 0.000</div>
<div class="t" style="top:784.80px;font-size:15px;line-height:20px;color:#333;font-weight:700;left:178.5px;width:1000px;text-align:right;">Round Off</div>
<div class="t" style="top:785.33px;font-size:15.5px;line-height:20px;color:#333;font-weight:700;letter-spacing:0.9px;left:424px;width:1000px;text-align:right;margin-right:-0.9px;"><svg width="7.80" height="11.70" viewBox="0 0 6 9" style="vertical-align:baseline;overflow:visible"><path d="M0 0.6 L6 0.6 M0 3.1 L6 3.1 M0.3 0.6 L2 0.6 C4.8 0.6 4.8 5.6 2 5.6 L0.6 5.6 L4.8 9" fill="none" stroke="#333" stroke-width="1.04"/></svg> 0.000</div>
<div class="t" style="top:824.80px;font-size:15px;line-height:20px;color:#333;font-weight:700;left:178.5px;width:1000px;text-align:right;">Grand Total</div>
<div class="t" style="top:825.33px;font-size:15.5px;line-height:20px;color:#333;font-weight:700;letter-spacing:0.9px;left:424px;width:1000px;text-align:right;margin-right:-0.9px;"><svg width="7.80" height="11.70" viewBox="0 0 6 9" style="vertical-align:baseline;overflow:visible"><path d="M0 0.6 L6 0.6 M0 3.1 L6 3.1 M0.3 0.6 L2 0.6 C4.8 0.6 4.8 5.6 2 5.6 L0.6 5.6 L4.8 9" fill="none" stroke="#333" stroke-width="1.04"/></svg> 71100.000</div>
<div class="r" style="left:230px;top:950px;width:1289px;height:50px;background:#fff;box-sizing:border-box;border-top:1px solid #d2d6de;"></div>
<div class="r" style="left:230px;top:1000px;width:1289px;height:1px;background:#b9bdbd;"></div>
<div class="t" style="top:968.03px;font-size:12.9px;line-height:17px;color:#333;font-weight:700;left:245.3px;">Copyright © 2021 All rights reserved.</div>
<div class="t" style="top:968.10px;font-size:12.7px;line-height:17px;color:#333;font-weight:700;left:504px;width:1000px;text-align:right;">Billing Book -v1.0</div>
</body></html>
